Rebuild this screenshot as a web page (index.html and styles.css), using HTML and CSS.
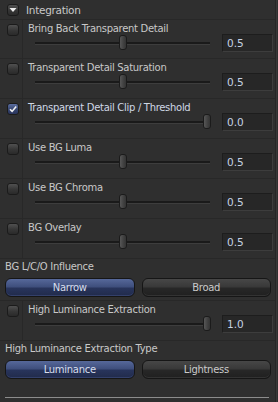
FILE: index.html
```html
<!DOCTYPE html>
<html lang="en">

<head>
    <meta charset="UTF-8">
    <title>Integration</title>
    <link rel="stylesheet" href="styles.css">
</head>

<body>
    <div class="panel">
        <div class="section-header">
            <span class="toggle">
                <svg width="8" height="6" viewBox="0 0 8 6"><path d="M0.5 1h7L4 5z" fill="#ececec" /></svg>
            </span>
            <span class="section-header__title">Integration</span>
        </div>

        <div class="control control--first">
            <div class="control__check"><span class="checkbox"></span></div>
            <div class="control__body">
                <div class="control__label">Bring Back Transparent Detail</div>
                <div class="slider">
                    <div class="slider__track"><span class="slider__thumb" style="left: 50%"></span></div>
                    <div class="slider__value">0.5</div>
                </div>
            </div>
        </div>

        <div class="control">
            <div class="control__check"><span class="checkbox"></span></div>
            <div class="control__body">
                <div class="control__label">Transparent Detail Saturation</div>
                <div class="slider">
                    <div class="slider__track"><span class="slider__thumb" style="left: 50%"></span></div>
                    <div class="slider__value">0.5</div>
                </div>
            </div>
        </div>

        <div class="control">
            <div class="control__check">
                <span class="checkbox checkbox--on">
                    <svg width="10" height="10" viewBox="0 0 10 10"><path d="M2 5.2l2.1 2.2L8.2 2.4" fill="none" stroke="#f2f2f2" stroke-width="1.6" /></svg>
                </span>
            </div>
            <div class="control__body">
                <div class="control__label control__label--on">Transparent Detail Clip / Threshold</div>
                <div class="slider">
                    <div class="slider__track"><span class="slider__thumb" style="left: 98%"></span></div>
                    <div class="slider__value">0.0</div>
                </div>
            </div>
        </div>

        <div class="control">
            <div class="control__check"><span class="checkbox"></span></div>
            <div class="control__body">
                <div class="control__label">Use BG Luma</div>
                <div class="slider">
                    <div class="slider__track"><span class="slider__thumb" style="left: 50%"></span></div>
                    <div class="slider__value">0.5</div>
                </div>
            </div>
        </div>

        <div class="control">
            <div class="control__check"><span class="checkbox"></span></div>
            <div class="control__body">
                <div class="control__label">Use BG Chroma</div>
                <div class="slider">
                    <div class="slider__track"><span class="slider__thumb" style="left: 50%"></span></div>
                    <div class="slider__value">0.5</div>
                </div>
            </div>
        </div>

        <div class="control">
            <div class="control__check"><span class="checkbox"></span></div>
            <div class="control__body">
                <div class="control__label">BG Overlay</div>
                <div class="slider">
                    <div class="slider__track"><span class="slider__thumb" style="left: 50%"></span></div>
                    <div class="slider__value">0.5</div>
                </div>
            </div>
        </div>

        <div class="choice">
            <div class="choice__label">BG L/C/O Influence</div>
            <div class="choice__buttons">
                <button class="choice__button choice__button--active">Narrow</button>
                <button class="choice__button">Broad</button>
            </div>
        </div>

        <div class="control">
            <div class="control__check"><span class="checkbox"></span></div>
            <div class="control__body">
                <div class="control__label">High Luminance Extraction</div>
                <div class="slider">
                    <div class="slider__track"><span class="slider__thumb" style="left: 98%"></span></div>
                    <div class="slider__value">1.0</div>
                </div>
            </div>
        </div>

        <div class="choice choice--last">
            <div class="choice__label">High Luminance Extraction Type</div>
            <div class="choice__buttons">
                <button class="choice__button choice__button--active">Luminance</button>
                <button class="choice__button">Lightness</button>
            </div>
        </div>

        <div class="rule"></div>
    </div>
</body>

</html>
```

FILE: styles.css
```css
:root {
    --panel-bg: #2f2f2f;
    --line-color: #282828;
    --text-color: #c8c8c8;
    --value-color: #c6d2e2;
    --field-bg: #272727;
}

body {
    margin: 0;
    background: var(--panel-bg);
    font-family: 'DejaVu Sans', sans-serif;
    font-size: 10px;
    letter-spacing: -0.3px;
    color: var(--text-color);
}

.panel {
    width: 275px;
    height: 402px;
    border-right: 1px solid #262626;
    box-shadow: 1px 0 0 #383838;
    overflow: hidden;
}

.section-header {
    display: flex;
    align-items: center;
    gap: 7px;
    height: 20px;
    padding-left: 7px;
    box-sizing: border-box;
    border-bottom: 1px solid var(--line-color);
}

.toggle,
.checkbox {
    display: flex;
    align-items: center;
    justify-content: center;
    width: 10px;
    height: 10px;
    border: 1px solid #1b1b1b;
    border-radius: 3px;
    background: linear-gradient(#505050, #363636 55%, #2a2a2a);
}

.section-header__title {
    font-size: 10.5px;
}

.control {
    display: flex;
    height: 40px;
    border-bottom: 1px solid var(--line-color);
    box-sizing: border-box;
}

.control--first {
    height: 39px;
}

.control__check {
    width: 23px;
    flex: none;
    border-right: 1px solid var(--line-color);
    padding: 4px 0 0 7px;
    box-sizing: border-box;
}

.checkbox--on {
    background: linear-gradient(#5c6ea0, #36456f 55%, #29345c);
}

.control__body {
    flex: 1;
    padding: 3px 0 0 5px;
}

.control__label {
    height: 11px;
    line-height: 11px;
}

.control__label--on {
    color: #d0d8e6;
}

.slider {
    display: flex;
    align-items: center;
}

.slider__track {
    position: relative;
    margin-left: 7px;
    width: 175px;
    height: 2px;
    background: #1a1a1a;
    border-bottom: 1px solid #3d3d3d;
}

.slider__thumb {
    position: absolute;
    top: -7px;
    width: 8px;
    height: 15px;
    margin-left: -4px;
    border: 1px solid #1b1b1b;
    border-radius: 3px;
    background: linear-gradient(90deg, #575757, #404040 60%, #343434);
    box-sizing: border-box;
}

.slider__value {
    margin-left: 12px;
    width: 51px;
    height: 18px;
    line-height: 17px;
    padding-left: 4px;
    box-sizing: border-box;
    background: var(--field-bg);
    border: 1px solid #1d1d1d;
    border-right-color: #3d3d3d;
    border-bottom-color: #3d3d3d;
    color: var(--value-color);
    font-size: 10.5px;
    letter-spacing: 0;
}

.choice {
    height: 42px;
    padding: 2px 4px 0 5px;
    box-sizing: border-box;
    border-bottom: 1px solid var(--line-color);
}

.choice--last {
    border-bottom: none;
}

.choice__label {
    height: 12px;
    line-height: 12px;
}

.choice__buttons {
    display: flex;
    gap: 7px;
    margin-top: 5px;
}

.choice__button {
    flex: 1;
    height: 19px;
    padding: 0;
    border: 1px solid #161616;
    border-radius: 6px;
    background: linear-gradient(#474747, #393939 45%, #272727 55%, #202020);
    box-shadow: inset 0 -1px 0 #333333;
    color: #cacaca;
    font-family: inherit;
    font-size: 10px;
    letter-spacing: -0.3px;
}

.choice__button--active {
    background: linear-gradient(#56689a, #3f4f7d 45%, #28345b 55%, #212b4b);
    box-shadow: inset 0 -1px 0 #33406a;
    color: #d6deec;
}

.rule {
    height: 1px;
    margin: 14px 6px 0 5px;
    background: #8c8c8c;
}
```
